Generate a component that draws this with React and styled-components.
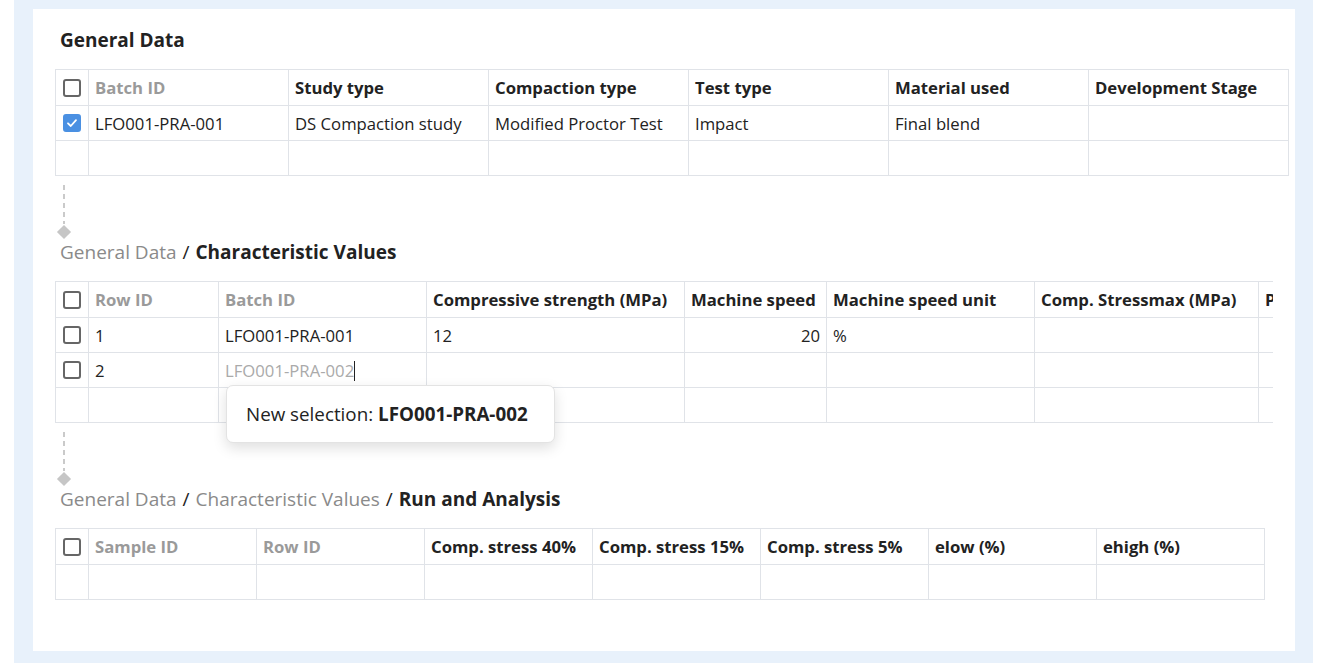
import React from 'react';
import styled, { createGlobalStyle } from 'styled-components';

const GlobalStyle = createGlobalStyle`
  html, body {
    margin: 0;
    padding: 0;
    background: #ffffff;
    font-family: "Open Sans", "Noto Sans", "Liberation Sans", sans-serif;
    color: #222;
  }
  * { box-sizing: border-box; }
`;

const Frame = styled.div`
  margin-left: 14px;
  width: 1299px;
  height: 663px;
  background: #e8f1fb;
  padding: 9px 18px 12px 19px;
`;

const Card = styled.div`
  background: #fff;
  height: 100%;
  padding: 19px 0 0 22px;
`;

const Title = styled.h2`
  margin: 0 0 17px 5px;
  font-size: 19px;
  line-height: 24px;
  font-weight: 700;
  color: #222;
`;

const Crumbs = styled.div`
  margin: 0 0 17px 5px;
  font-size: 19px;
  line-height: 24px;
  color: #222;
  white-space: nowrap;
`;

const CrumbPast = styled.span`
  color: #8a8a8a;
  font-weight: 400;
`;

const CrumbSep = styled.span`
  color: #222;
  margin: 0 6px;
`;

const CrumbCurrent = styled.span`
  font-weight: 700;
  color: #222;
`;

const Connector = styled.div`
  width: 20px;
  height: 55px;
  margin: 9px 0 0 4px;
`;

const DashLine = styled.div`
  width: 2px;
  margin-left: 4px;
  height: 39px;
  background: repeating-linear-gradient(to bottom, #cacaca 0 5px, transparent 5px 9px);
`;

const Diamond = styled.div`
  width: 10px;
  height: 10px;
  margin-top: 3px;
  background: #c6c6c6;
  transform: rotate(45deg);
`;

const TableArea = styled.div`
  position: relative;
  width: ${p => p.$w}px;
`;

const Clip = styled.div`
  width: ${p => p.$w}px;
  overflow: hidden;
`;

const Table = styled.table`
  border-collapse: collapse;
  table-layout: fixed;
  width: ${p => p.$w}px;
  font-size: 16.7px;
`;

const Th = styled.th`
  width: ${p => p.$w}px;
  height: 36px;
  padding: 0 6px;
  text-align: left;
  font-weight: 700;
  color: ${p => (p.$muted ? '#9a9a9a' : '#222')};
  border: 1px solid #e0e3e8;
  white-space: nowrap;
  overflow: hidden;
`;

const Td = styled.td`
  height: 35px;
  padding: 0 6px;
  color: ${p => (p.$ghost ? '#aaa' : '#222')};
  text-align: ${p => (p.$right ? 'right' : 'left')};
  border: 1px solid #e0e3e8;
  white-space: nowrap;
  overflow: hidden;
`;

const BoxCell = styled.td`
  width: 33px;
  height: 35px;
  padding: 0 0 0 7px;
  border: 1px solid #e0e3e8;
`;

const BoxHead = styled(BoxCell).attrs({ as: 'th' })`
  height: 36px;
`;

const Box = styled.span`
  display: block;
  width: 18px;
  height: 18px;
  border-radius: 3px;
  border: 2px solid ${p => (p.$checked ? '#4a90e2' : '#666')};
  background: ${p => (p.$checked ? '#4a90e2' : '#fff')};
  position: relative;
  svg { position: absolute; left: 1px; top: 1px; }
`;

const Caret = styled.span`
  display: inline-block;
  width: 1px;
  height: 20px;
  background: #222;
  vertical-align: -4px;
`;

const Tooltip = styled.div`
  position: absolute;
  left: 171px;
  top: 104px;
  width: 329px;
  height: 58px;
  background: #fff;
  border: 1px solid #e3e3e3;
  border-radius: 7px;
  box-shadow: 0 5px 14px rgba(0, 0, 0, 0.13);
  padding: 0 19px;
  display: flex;
  align-items: center;
  font-size: 18.8px;
  color: #222;
  z-index: 2;
  white-space: nowrap;
  b { font-weight: 700; margin-left: 5px; }
`;

const Check = ({ checked }) => (
  <Box $checked={checked}>
    {checked && (
      <svg width="12" height="12" viewBox="0 0 12 12">
        <path d="M2 6.3 L4.8 9 L10 3.2" fill="none" stroke="#fff" strokeWidth="1.8" strokeLinecap="round" strokeLinejoin="round" />
      </svg>
    )}
  </Box>
);

const Connect = () => (
  <Connector>
    <DashLine />
    <Diamond />
  </Connector>
);

const general = [
  { t: 'Batch ID', w: 200, muted: true },
  { t: 'Study type', w: 200 },
  { t: 'Compaction type', w: 200 },
  { t: 'Test type', w: 200 },
  { t: 'Material used', w: 200 },
  { t: 'Development Stage', w: 200 },
];

const charCols = [
  { t: 'Row ID', w: 130, muted: true },
  { t: 'Batch ID', w: 208, muted: true },
  { t: 'Compressive strength (MPa)', w: 258 },
  { t: 'Machine speed', w: 142 },
  { t: 'Machine speed unit', w: 208 },
  { t: 'Comp. Stressmax (MPa)', w: 224 },
  { t: 'Peak force (N)', w: 200 },
];

const runCols = [
  { t: 'Sample ID', w: 168, muted: true },
  { t: 'Row ID', w: 168, muted: true },
  { t: 'Comp. stress 40%', w: 168 },
  { t: 'Comp. stress 15%', w: 168 },
  { t: 'Comp. stress 5%', w: 168 },
  { t: 'elow (%)', w: 168 },
  { t: 'ehigh (%)', w: 168 },
];

const total = cols => 33 + cols.reduce((s, c) => s + c.w, 0);

const Head = ({ cols }) => (
  <thead>
    <tr>
      <BoxHead><Check /></BoxHead>
      {cols.map(c => (
        <Th key={c.t} $w={c.w} $muted={c.muted}>{c.t}</Th>
      ))}
    </tr>
  </thead>
);

const EmptyRow = ({ cols }) => (
  <tr>
    <BoxCell />
    {cols.map(c => <Td key={c.t} />)}
  </tr>
);

export default function App() {
  return (
    <>
      <GlobalStyle />
      <Frame>
        <Card>
          <Title>General Data</Title>
          <TableArea $w={total(general)}>
            <Table $w={total(general)}>
              <Head cols={general} />
              <tbody>
                <tr>
                  <BoxCell><Check checked /></BoxCell>
                  <Td>LFO001-PRA-001</Td>
                  <Td>DS Compaction study</Td>
                  <Td>Modified Proctor Test</Td>
                  <Td>Impact</Td>
                  <Td>Final blend</Td>
                  <Td />
                </tr>
                <EmptyRow cols={general} />
              </tbody>
            </Table>
          </TableArea>

          <Connect />
          <Crumbs>
            <CrumbPast>General Data</CrumbPast>
            <CrumbSep>/</CrumbSep>
            <CrumbCurrent>Characteristic Values</CrumbCurrent>
          </Crumbs>
          <TableArea $w={1218}>
            <Clip $w={1218}>
              <Table $w={total(charCols)}>
                <Head cols={charCols} />
                <tbody>
                  <tr>
                    <BoxCell><Check /></BoxCell>
                    <Td>1</Td>
                    <Td>LFO001-PRA-001</Td>
                    <Td>12</Td>
                    <Td $right>20</Td>
                    <Td>%</Td>
                    <Td />
                    <Td />
                  </tr>
                  <tr>
                    <BoxCell><Check /></BoxCell>
                    <Td>2</Td>
                    <Td $ghost>LFO001-PRA-002<Caret /></Td>
                    <Td />
                    <Td />
                    <Td />
                    <Td />
                    <Td />
                  </tr>
                  <EmptyRow cols={charCols} />
                </tbody>
              </Table>
            </Clip>
            <Tooltip>
              New selection: <b>LFO001-PRA-002</b>
            </Tooltip>
          </TableArea>

          <Connect />
          <Crumbs>
            <CrumbPast>General Data</CrumbPast>
            <CrumbSep>/</CrumbSep>
            <CrumbPast>Characteristic Values</CrumbPast>
            <CrumbSep>/</CrumbSep>
            <CrumbCurrent>Run and Analysis</CrumbCurrent>
          </Crumbs>
          <TableArea $w={total(runCols)}>
            <Table $w={total(runCols)}>
              <Head cols={runCols} />
              <tbody>
                <EmptyRow cols={runCols} />
              </tbody>
            </Table>
          </TableArea>
        </Card>
      </Frame>
    </>
  );
}
